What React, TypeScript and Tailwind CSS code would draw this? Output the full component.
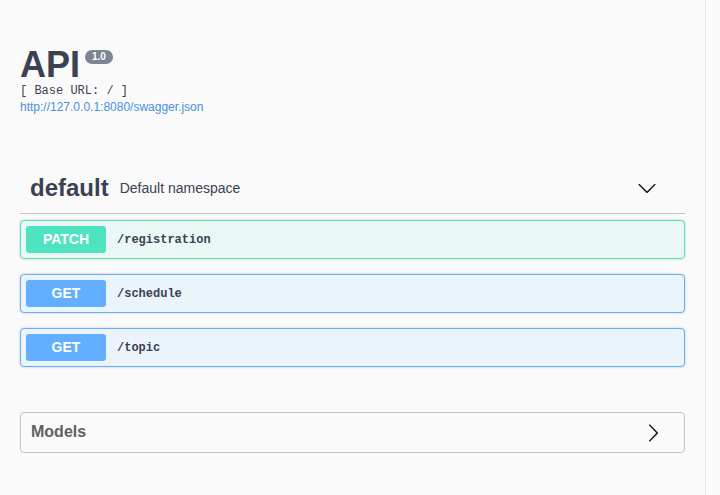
const sans = "font-['Liberation_Sans',Arial,sans-serif]";
const mono = "font-['Liberation_Mono','Courier_New',monospace]";

interface Operation {
  method: string;
  path: string;
  row: string;
  badge: string;
}

const operations: Operation[] = [
  { method: "PATCH", path: "/registration", row: "border-[#50e3c2] bg-[#e9f8f4]", badge: "bg-[#50e3c2]" },
  { method: "GET", path: "/schedule", row: "border-[#61affe] bg-[#ebf3fb]", badge: "bg-[#61affe]" },
  { method: "GET", path: "/topic", row: "border-[#61affe] bg-[#ebf3fb]", badge: "bg-[#61affe]" },
];

const ChevronDown = () => (
  <svg width="20" height="20" viewBox="0 0 20 20" className="text-[#1a1a1a]" fill="currentColor">
    <path d="M17.418 6.109c.272-.268.709-.268.979 0s.271.701 0 .969l-7.908 7.83c-.27.268-.707.268-.979 0l-7.908-7.83c-.27-.268-.27-.701 0-.969.271-.268.709-.268.979 0L10 13.25l7.418-7.141z" />
  </svg>
);

const ChevronRight = () => (
  <svg width="20" height="20" viewBox="0 0 20 20" className="text-[#1a1a1a]" fill="currentColor">
    <path d="M13.25 10L6.109 2.58c-.268-.272-.268-.709 0-.979.268-.27.701-.27.969 0l7.83 7.908c.268.271.268.709 0 .979l-7.83 7.908c-.268.271-.701.27-.969 0-.268-.269-.268-.707 0-.979L13.25 10z" />
  </svg>
);

export default function App() {
  return (
    <div className={`flex h-[495px] w-[720px] overflow-hidden bg-[#fafafa] text-[#3b4151] ${sans}`}>
      <main className="flex-1 px-[20px]">
        {/* info */}
        <div className="mt-[47px] flex items-start">
          <h2 className="text-[36px] font-bold leading-[36px]">API</h2>
          <span className="ml-[5px] mt-[3px] rounded-[57px] bg-[#7d8492] px-[7px] text-[10px] font-bold leading-[14px] text-white">
            1.0
          </span>
        </div>
        <div className={`mt-[1px] text-[12px] leading-[15px] ${mono}`}>[ Base URL: / ]</div>
        <a className="block text-[12px] leading-[16px] text-[#4990e2]" href="#">
          http://127.0.0.1:8080/swagger.json
        </a>

        {/* tag */}
        <div className="mt-[49px] flex items-center border-b border-[#c1c3c7] pb-[11px] pl-[10px] pt-[10px]">
          <h3 className="text-[24px] font-bold leading-[28px]">default</h3>
          <span className="ml-[11px] text-[14px] leading-[20px]">Default namespace</span>
          <span className="ml-auto mr-[28px] flex">
            <ChevronDown />
          </span>
        </div>

        <div className="mt-[6px] flex flex-col gap-[15px]">
          {operations.map((op, i) => (
            <div
              key={i}
              className={`flex items-center rounded-[4px] border p-[5px] shadow-[0_0_3px_rgba(0,0,0,0.19)] ${op.row}`}
            >
              <span
                className={`flex h-[27px] w-[80px] items-center justify-center rounded-[3px] text-[14px] font-bold text-white ${op.badge}`}
              >
                {op.method}
              </span>
              <span className={`ml-[11px] text-[12px] font-bold ${mono}`}>{op.path}</span>
            </div>
          ))}
        </div>

        {/* models */}
        <div className="mt-[45px] flex h-[41px] items-center rounded-[4px] border border-[#c1c3c7] pl-[10px] pr-[21px]">
          <h4 className="mb-[3px] text-[16px] font-bold leading-[19px] text-[#606060]">Models</h4>
          <span className="ml-auto flex">
            <ChevronRight />
          </span>
        </div>
      </main>
      {/* scrollbar track */}
      <div className="w-[15px] border-l border-[#e8e8e8] bg-[#fafafa]" />
    </div>
  );
}
